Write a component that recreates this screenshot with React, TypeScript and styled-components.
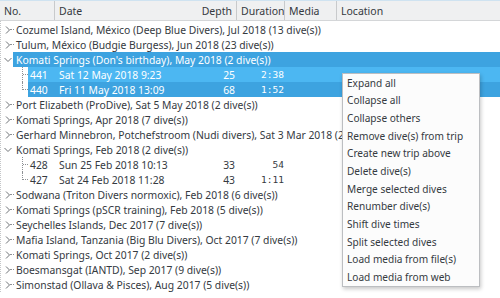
import styled, { createGlobalStyle, css } from 'styled-components'

const GlobalStyle = createGlobalStyle`
  html, body {
    margin: 0;
    padding: 0;
    background: #ffffff;
  }
  body {
    font-family: 'Noto Sans', 'DejaVu Sans', sans-serif;
    font-size: 10.35px;
    color: #353a3f;
  }
`

const SELECTED = '#3da3e0'
const SELECTED_HOVER = '#4cb7f2'

const Screen = styled.div`
  position: relative;
  width: 500px;
  height: 298px;
  overflow: hidden;
  background: #fff;
`

const Header = styled.div`
  display: grid;
  grid-template-columns: 55px 145px 37px 48px 52px 1fr;
  height: 21px;
  background: #eff0f1;
  border-top: 1px solid #cfe3f1;
  border-bottom: 1px solid #d4d6d8;
  box-sizing: border-box;
`

const HeaderCell = styled.div<{ $right?: boolean; $sep?: boolean }>`
  display: flex;
  align-items: center;
  justify-content: ${p => (p.$right ? 'flex-end' : 'flex-start')};
  padding: 0 4px;
  border-right: ${p => (p.$sep ? '1px solid #c8cacc' : 'none')};
  font-size: 10.5px;
  white-space: nowrap;
  overflow: hidden;
`

const List = styled.div`
  padding-top: 1px;
  border-left: 1px dotted #c4c6c8;
`

const TripRowBox = styled.div`
  display: flex;
  height: 15px;
  align-items: stretch;
`

const Branch = styled.div`
  position: relative;
  width: 12px;
  flex: none;
  display: flex;
  align-items: center;
`

const Connector = styled.span`
  position: absolute;
  left: 9px;
  top: 7px;
  width: 4px;
  border-top: 1px dotted #8e9195;
`

const TripLabel = styled.div<{ $selected?: boolean }>`
  flex: 1;
  display: flex;
  align-items: center;
  padding-left: 3px;
  white-space: nowrap;
  ${p =>
    p.$selected &&
    css`
      background: ${SELECTED};
      color: #fff;
    `}
`

const DiveRowBox = styled.div`
  display: flex;
  height: 15px;
`

const Guide = styled.div<{ $last?: boolean }>`
  position: relative;
  width: 27px;
  flex: none;

  &::before {
    content: '';
    position: absolute;
    left: 21px;
    top: 0;
    height: ${p => (p.$last ? '8px' : '15px')};
    border-left: 1px dotted #8e9195;
  }
  &::after {
    content: '';
    position: absolute;
    left: 22px;
    top: 7px;
    width: 5px;
    border-top: 1px dotted #8e9195;
  }
`

const DiveCells = styled.div<{ $selected?: boolean; $hover?: boolean }>`
  flex: 1;
  display: grid;
  grid-template-columns: 28px 145px 37px 48px 52px 1fr;
  align-items: center;
  background: ${p => (p.$selected ? (p.$hover ? SELECTED_HOVER : SELECTED) : 'transparent')};
  color: ${p => (p.$selected ? '#fff' : '#353a3f')};
`

const Cell = styled.div<{ $right?: boolean; $pad?: string; $mono?: boolean }>`
  white-space: nowrap;
  text-align: ${p => (p.$right ? 'right' : 'left')};
  padding: ${p => p.$pad || '0'};
  ${p =>
    p.$mono &&
    css`
      font-family: 'DejaVu Sans Mono', 'Liberation Mono', monospace;
      font-size: 9.5px;
    `}
`

const Menu = styled.div`
  position: absolute;
  left: 342px;
  top: 73px;
  width: 138px;
  background: #fcfcfc;
  border: 1px solid #bcbec1;
  box-sizing: border-box;
  box-shadow: 1px 2px 4px rgba(0, 0, 0, 0.22);
`

const MenuItem = styled.div`
  height: 17.67px;
  display: flex;
  align-items: center;
  padding-left: 4px;
  font-size: 10.1px;
  color: #353a3f;
  white-space: nowrap;
`

const Chevron = ({ open }: { open?: boolean }) =>
  open ? (
    <svg width="8" height="6" viewBox="0 0 8 6" style={{ marginLeft: 3 }}>
      <path d="M0.5 1 L4 4.5 L7.5 1" fill="none" stroke="#6f7377" strokeWidth="1" />
    </svg>
  ) : (
    <svg width="6" height="8" viewBox="0 0 6 8" style={{ marginLeft: 4 }}>
      <path d="M1 0.5 L4.5 4 L1 7.5" fill="none" stroke="#6f7377" strokeWidth="1" />
    </svg>
  )

type Dive = { no: number; date: string; depth: number; duration: string; selected?: boolean; hover?: boolean }
type Trip = { label: string; selected?: boolean; dives?: Dive[] }

const trips: Trip[] = [
  { label: 'Cozumel Island, México (Deep Blue Divers), Jul 2018 (13 dive(s))' },
  { label: 'Tulum, México (Budgie Burgess), Jun 2018 (23 dive(s))' },
  {
    label: "Komati Springs (Don's birthday), May 2018 (2 dive(s))",
    selected: true,
    dives: [
      { no: 441, date: 'Sat 12 May 2018 9:23', depth: 25, duration: '2:38', selected: true, hover: true },
      { no: 440, date: 'Fri 11 May 2018 13:09', depth: 68, duration: '1:52', selected: true },
    ],
  },
  { label: 'Port Elizabeth (ProDive), Sat 5 May 2018 (2 dive(s))' },
  { label: 'Komati Springs, Apr 2018 (7 dive(s))' },
  { label: 'Gerhard Minnebron, Potchefstroom (Nudi divers), Sat 3 Mar 2018 (2 dive(s))' },
  {
    label: 'Komati Springs, Feb 2018 (2 dive(s))',
    dives: [
      { no: 428, date: 'Sun 25 Feb 2018 10:13', depth: 33, duration: '54' },
      { no: 427, date: 'Sat 24 Feb 2018 11:28', depth: 43, duration: '1:11' },
    ],
  },
  { label: 'Sodwana (Triton Divers normoxic), Feb 2018 (6 dive(s))' },
  { label: 'Komati Springs (pSCR training), Feb 2018 (5 dive(s))' },
  { label: 'Seychelles Islands, Dec 2017 (7 dive(s))' },
  { label: 'Mafia Island, Tanzania (Big Blu Divers), Oct 2017 (7 dive(s))' },
  { label: 'Komati Springs, Oct 2017 (2 dive(s))' },
  { label: 'Boesmansgat (IANTD), Sep 2017 (9 dive(s))' },
  { label: 'Simonstad (Ollava & Pisces), Aug 2017 (5 dive(s))' },
]

const menuItems = [
  'Expand all',
  'Collapse all',
  'Collapse others',
  'Remove dive(s) from trip',
  'Create new trip above',
  'Delete dive(s)',
  'Merge selected dives',
  'Renumber dive(s)',
  'Shift dive times',
  'Split selected dives',
  'Load media from file(s)',
  'Load media from web',
]

export default function App() {
  return (
    <Screen>
      <GlobalStyle />
      <Header>
        <HeaderCell $sep>No.</HeaderCell>
        <HeaderCell>Date</HeaderCell>
        <HeaderCell $right $sep>
          Depth
        </HeaderCell>
        <HeaderCell $sep>Duration</HeaderCell>
        <HeaderCell $sep>Media</HeaderCell>
        <HeaderCell>Location</HeaderCell>
      </Header>
      <List>
        {trips.map(trip => (
          <div key={trip.label}>
            <TripRowBox>
              <Branch>
                <Chevron open={!!trip.dives} />
                {!trip.dives && <Connector />}
              </Branch>
              <TripLabel $selected={trip.selected}>{trip.label}</TripLabel>
            </TripRowBox>
            {trip.dives?.map((dive, i) => (
              <DiveRowBox key={dive.no}>
                <Guide $last={i === trip.dives!.length - 1} />
                <DiveCells $selected={dive.selected} $hover={dive.hover}>
                  <Cell $pad="0 0 0 2px">{dive.no}</Cell>
                  <Cell $pad="0 0 0 3px">{dive.date}</Cell>
                  <Cell $right $pad="0 3px 0 0">
                    {dive.depth}
                  </Cell>
                  <Cell $right $mono $pad="0 2px 0 0">
                    {dive.duration}
                  </Cell>
                  <Cell />
                  <Cell />
                </DiveCells>
              </DiveRowBox>
            ))}
          </div>
        ))}
      </List>
      <Menu>
        {menuItems.map(item => (
          <MenuItem key={item}>{item}</MenuItem>
        ))}
      </Menu>
    </Screen>
  )
}
